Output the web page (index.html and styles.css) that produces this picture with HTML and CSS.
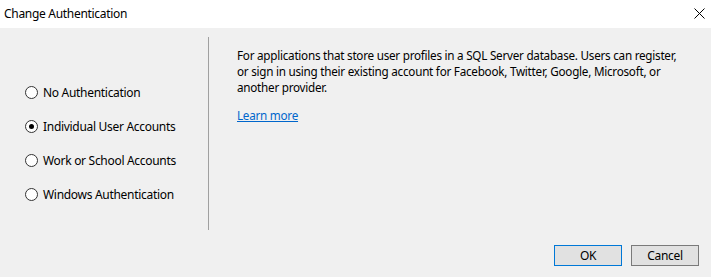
FILE: index.html
```html
<!DOCTYPE html>
<html>
<head>
<meta charset="utf-8">
<link rel="stylesheet" href="styles.css">
</head>
<body>
<div class="dialog">
  <div class="titlebar">
    <span class="title">Change Authentication</span>
    <svg class="close" width="11" height="11" viewBox="0 0 11 11"><path d="M0.5 0.5 L10.5 10.5 M10.5 0.5 L0.5 10.5" stroke="#000" stroke-width="1" fill="none"/></svg>
  </div>
  <div class="main">
    <div class="options">
      <label class="option"><span class="radio"></span><span>No Authentication</span></label>
      <label class="option"><span class="radio checked"></span><span>Individual User Accounts</span></label>
      <label class="option"><span class="radio"></span><span>Work or School Accounts</span></label>
      <label class="option"><span class="radio"></span><span>Windows Authentication</span></label>
    </div>
    <div class="details">
      <p class="desc">For applications that store user profiles in a SQL Server database. Users can register,<br>or sign in using their existing account for Facebook, Twitter, Google, Microsoft, or<br>another provider.</p>
      <a class="link" href="#">Learn more</a>
    </div>
  </div>
  <div class="footer">
    <button class="btn default">OK</button>
    <button class="btn">Cancel</button>
  </div>
</div>
</body>
</html>
```
FILE: styles.css
```css
html, body {
  margin: 0;
  padding: 0;
}
body {
  background: #f0f0f0;
  font-family: "Segoe UI", "Noto Sans", "Open Sans", sans-serif;
  font-size: 12px;
  letter-spacing: -0.3px;
  color: #000;
  width: 711px;
  height: 277px;
  overflow: hidden;
}
.titlebar {
  height: 28px;
  background: #fff;
  display: flex;
  align-items: center;
  justify-content: space-between;
  padding: 0 6px 2px 4px;
  box-sizing: border-box;
}
.title {
  font-size: 12px;
}
.close {
  display: block;
}
.main {
  display: flex;
  padding-top: 9px;
  height: 202px;
  box-sizing: border-box;
}
.options {
  width: 209px;
  height: 193px;
  border-right: 1px solid #a0a0a0;
  padding: 38px 0 0 25px;
  box-sizing: border-box;
  display: flex;
  flex-direction: column;
}
.option {
  display: flex;
  align-items: center;
  height: 34px;
  gap: 5px;
  white-space: nowrap;
}
.radio {
  width: 13px;
  height: 13px;
  border: 1px solid #333;
  border-radius: 50%;
  background: #fff;
  box-sizing: border-box;
  display: flex;
  align-items: center;
  justify-content: center;
  flex: none;
}
.radio.checked::after {
  content: "";
  width: 5px;
  height: 5px;
  border-radius: 50%;
  background: #000;
}
.details {
  padding: 10px 0 0 28px;
  flex: 1;
  white-space: nowrap;
  font-size: 11.7px;
  letter-spacing: -0.25px;
}
.desc {
  margin: 0 0 12px 0;
  line-height: 16px;
}
.link {
  color: #0066cc;
  text-decoration: underline;
  line-height: 16px;
}
.footer {
  display: flex;
  justify-content: flex-end;
  gap: 9px;
  padding: 15px 12px 0 0;
}
.btn {
  width: 68px;
  height: 21px;
  background: #e1e1e1;
  border: 1px solid #adadad;
  font-family: inherit;
  font-size: 12px;
  letter-spacing: inherit;
  color: #000;
  padding: 0;
  margin: 0;
  box-sizing: border-box;
}
.btn.default {
  border-color: #0078d7;
}
.btn:not(.default) {
  border-color: #7a7a7a;
}
```
